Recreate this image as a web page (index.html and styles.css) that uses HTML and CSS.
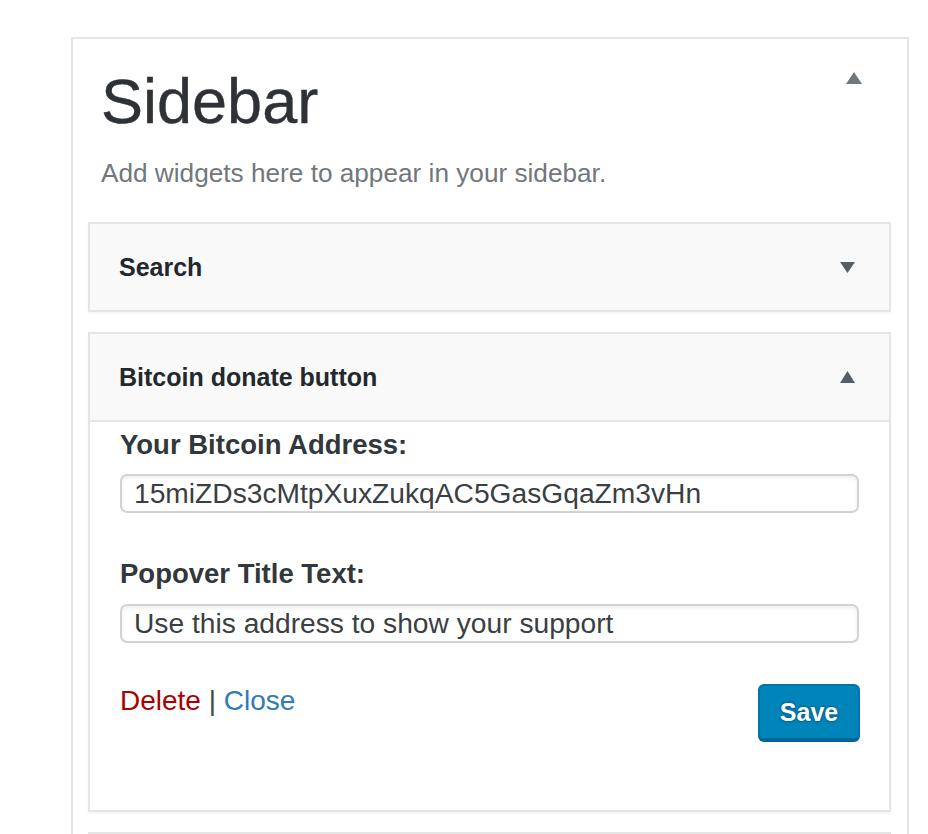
FILE: index.html
```html
<!DOCTYPE html>
<html>
<head>
<meta charset="utf-8">
<title>Sidebar</title>
<link rel="stylesheet" href="styles.css">
</head>
<body>
<div class="sidebar">
  <div class="sidebar-head">
    <div class="sidebar-text">
      <h2 class="sidebar-title">Sidebar</h2>
      <p class="sidebar-desc">Add widgets here to appear in your sidebar.</p>
    </div>
    <svg class="toggle toggle-main" width="16" height="12" viewBox="0 0 16 12"><path d="M8 0 L16 12 L0 12 Z" fill="#72777c"/></svg>
  </div>

  <div class="widget widget-first">
    <div class="widget-top">
      <h3 class="widget-title">Search</h3>
      <svg class="toggle" width="15" height="11" viewBox="0 0 15 11"><path d="M0 0 L15 0 L7.5 11 Z" fill="#555d66"/></svg>
    </div>
  </div>

  <div class="widget">
    <div class="widget-top widget-top-open">
      <h3 class="widget-title">Bitcoin donate button</h3>
      <svg class="toggle" width="15" height="12" viewBox="0 0 15 12"><path d="M7.5 0 L15 12 L0 12 Z" fill="#555d66"/></svg>
    </div>
    <div class="widget-inside">
      <label class="field-label">Your Bitcoin Address:</label>
      <input class="field-input" type="text" value="15miZDs3cMtpXuxZukqAC5GasGqaZm3vHn">
      <label class="field-label field-label-gap">Popover Title Text:</label>
      <input class="field-input" type="text" value="Use this address to show your support">
      <div class="actions">
        <div class="links"><a class="link-delete">Delete</a> <span class="sep">|</span> <a class="link-close">Close</a></div>
        <button class="btn-save">Save</button>
      </div>
    </div>
  </div>

  <div class="widget">
    <div class="widget-top"></div>
  </div>
</div>
</body>
</html>
```

FILE: styles.css
```css
html, body {
  margin: 0;
  padding: 0;
  background: #fff;
  height: 834px;
  overflow: hidden;
  font-family: "Liberation Sans", Arial, Helvetica, sans-serif;
}

.sidebar {
  box-sizing: border-box;
  margin: 37px 0 0 71px;
  width: 838px;
  min-height: 900px;
  border: 2px solid #e5e5e5;
  border-bottom: none;
  padding: 0 16px 0 15px;
  background: #fff;
}

.sidebar-head {
  display: flex;
  justify-content: space-between;
  align-items: flex-start;
  padding: 30px 29px 0 13px;
}

.sidebar-title {
  margin: 0;
  font-size: 63px;
  line-height: 64px;
  font-weight: 400;
  color: #2e3236;
  -webkit-text-stroke: 0.4px #2e3236;
}

.sidebar-desc {
  margin: 27px 0 0;
  font-size: 26.2px;
  line-height: 26px;
  color: #72777c;
}

.toggle {
  display: block;
  flex: none;
}

.toggle-main {
  margin-top: 3px;
}

.widget {
  border: 2px solid #e5e5e5;
  background: #fff;
  box-shadow: 0 2px 2px rgba(0, 0, 0, 0.04);
  margin-top: 20px;
}

.widget-first {
  margin-top: 36px;
}

.widget-top {
  display: flex;
  align-items: center;
  justify-content: space-between;
  height: 86px;
  padding: 0 34px 0 29px;
  background: #f9f9f9;
}

.widget-top-open {
  border-bottom: 2px solid #e5e5e5;
}

.widget-title {
  margin: 0;
  font-size: 25px;
  font-weight: 700;
  color: #23282d;
}

.widget-inside {
  display: flex;
  flex-direction: column;
  padding: 9px 30px 70px 30px;
}

.field-label {
  font-size: 27.5px;
  line-height: 28px;
  font-weight: 700;
  color: #32373c;
  margin-bottom: 15px;
}

.field-label-gap {
  margin-top: 47px;
  margin-bottom: 16px;
}

.field-input {
  box-sizing: border-box;
  height: 39px;
  width: 100%;
  margin: 0;
  border: 2px solid #d2d2d2;
  border-radius: 7px;
  padding: 0 12px;
  box-shadow: inset 0 2px 4px rgba(0, 0, 0, 0.07);
  font-family: "Liberation Sans", Arial, Helvetica, sans-serif;
  font-size: 28.2px;
  color: #3a3f44;
  background: #fff;
  outline: none;
}

.actions {
  display: flex;
  justify-content: space-between;
  align-items: flex-start;
  margin-top: 41px;
}

.links {
  padding-top: 3px;
  font-size: 28px;
  line-height: 28px;
  color: #32373c;
}

.link-delete {
  color: #a00;
}

.link-close {
  color: #337ab7;
}

.sep {
  color: #444;
}

.btn-save {
  box-sizing: border-box;
  width: 102px;
  height: 56px;
  margin: 0 -1px 0 0;
  padding: 0;
  background: #0085ba;
  border: 2px solid #0073aa;
  border-bottom-color: #006799;
  border-radius: 6px;
  box-shadow: 0 2px 0 #006799;
  color: #fff;
  font-family: "Liberation Sans", Arial, Helvetica, sans-serif;
  font-size: 25px;
  font-weight: 700;
  text-shadow: 0 -1px 2px #006799, 1px 0 2px #006799, 0 1px 2px #006799, -1px 0 2px #006799;
}
```
